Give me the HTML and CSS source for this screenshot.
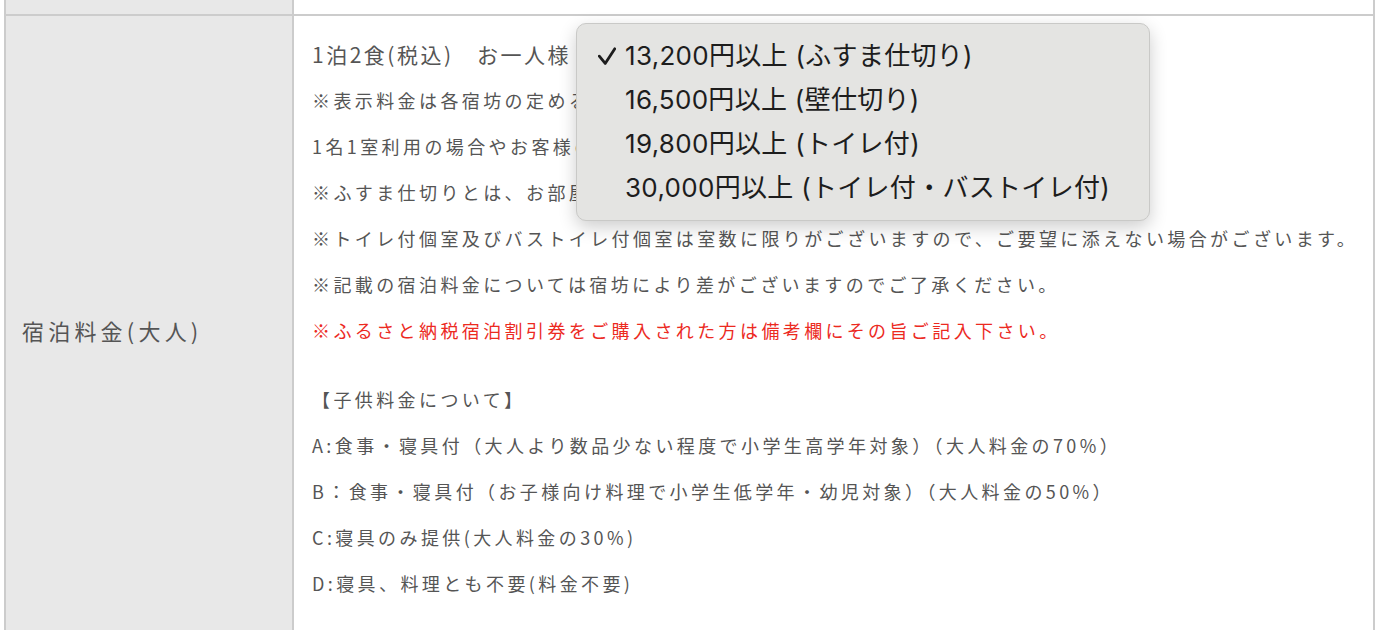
FILE: index.html
```html
<!DOCTYPE html>
<html lang="ja">
<head>
    <meta charset="UTF-8">
    <title>宿泊料金</title>
    <link rel="stylesheet" href="styles.css">
</head>
<body>

    <table class="fee-table">
        <colgroup>
            <col class="col-head">
            <col>
        </colgroup>
        <tr class="prev-row">
            <th></th>
            <td></td>
        </tr>
        <tr>
            <th>宿泊料金(大人)</th>
            <td>
                <div class="fee-lead">1泊2食(税込)　お一人様
                    <!-- プルダウンを開いた状態 -->
                    <ul class="select-menu">
                        <li class="checked">
                            <svg class="check" width="18" height="18" viewBox="0 0 18 18">
                                <path d="M1.3 9.2 L7.2 16.4 L16.8 1.8" fill="none" stroke="#1d1d1d" stroke-width="2.8" stroke-linecap="round" stroke-linejoin="round"/>
                            </svg>
                            13,200円以上 (ふすま仕切り)
                        </li>
                        <li>16,500円以上 (壁仕切り)</li>
                        <li>19,800円以上 (トイレ付)</li>
                        <li>30,000円以上 (トイレ付・バストイレ付)</li>
                    </ul>
                </div>
                <p>※表示料金は各宿坊の定める基本料金です。</p>
                <p>1名1室利用の場合やお客様のご要望により異なります。</p>
                <p>※ふすま仕切りとは、お部屋をふすまで仕切ったお部屋です。</p>
                <p>※トイレ付個室及びバストイレ付個室は室数に限りがございますので、ご要望に添えない場合がございます。</p>
                <p>※記載の宿泊料金については宿坊により差がございますのでご了承ください。</p>
                <p class="notice">※ふるさと納税宿泊割引券をご購入された方は備考欄にその旨ご記入下さい。</p>

                <p class="child-title">【子供料金について】</p>
                <p>A:食事・寝具付（大人より数品少ない程度で小学生高学年対象）（大人料金の70%）</p>
                <p>B：食事・寝具付（お子様向け料理で小学生低学年・幼児対象）（大人料金の50%）</p>
                <p>C:寝具のみ提供(大人料金の30%)</p>
                <p>D:寝具、料理とも不要(料金不要)</p>
            </td>
        </tr>
    </table>

</body>
</html>
```

FILE: styles.css
```css
body {
    margin: 0;
    font-family: "Noto Sans CJK JP", sans-serif;
    color: #555;
    background-color: #ffffff;
}

.fee-table {
    border-collapse: collapse;
    table-layout: fixed;
    width: 1371px;
    margin-left: 4px;
}

.col-head {
    width: 288px;
}

.fee-table th,
.fee-table td {
    border: 2px solid #cccccc;
}

.fee-table th {
    padding: 0 16px;
    background-color: #e8e8e8;
    font-weight: normal;
    font-size: 22px;
    letter-spacing: 4.2px;
    text-align: left;
    vertical-align: middle;
}

.fee-table td {
    padding: 15px 8px 37px 18px;
    vertical-align: top;
}

/* 上の行は一部だけ見えている */
.prev-row th,
.prev-row td {
    border-top: none;
    height: 14px;
    padding: 0;
}

.fee-table td p {
    margin: 0;
    line-height: 46px;
    font-size: 18px;
    letter-spacing: 3.4px;
}

.fee-lead {
    position: relative;
    line-height: 46px;
    font-size: 21px;
    letter-spacing: 2.5px;
}

.notice {
    color: #ec2a1f;
}

.fee-table td .child-title {
    margin-top: 23px;
}

/* セレクトのポップアップ */
.select-menu {
    position: absolute;
    left: 264px;
    top: -8px;
    width: 572px;
    margin: 0;
    padding: 10px 0 10px 0;
    list-style: none;
    background-color: #e4e4e2;
    border: 1px solid #c9c9c7;
    border-radius: 10px;
    box-shadow: 0 6px 18px rgba(0, 0, 0, 0.2);
    font-family: Inter, "Noto Sans CJK JP", sans-serif;
    font-size: 26px;
    letter-spacing: 0.3px;
    color: #1d1d1d;
}

.select-menu li {
    position: relative;
    height: 44px;
    line-height: 44px;
    padding-left: 48px;
    white-space: nowrap;
}

.select-menu .check {
    position: absolute;
    left: 21px;
    top: 13px;
}
```
